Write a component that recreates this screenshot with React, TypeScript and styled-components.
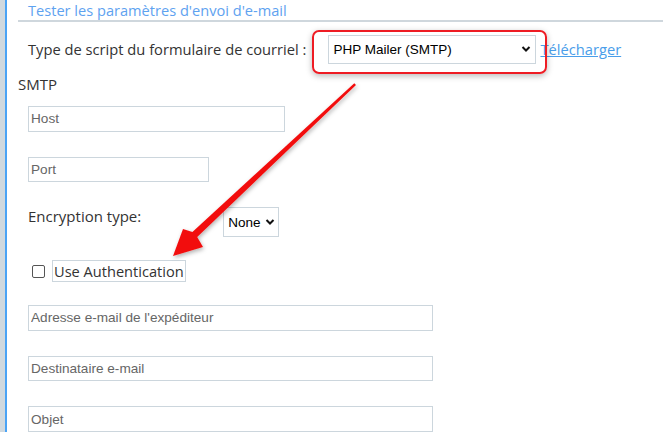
import React from "react";
import styled, { createGlobalStyle } from "styled-components";

const Global = createGlobalStyle`
  html, body { margin: 0; padding: 0; background: #fff; }
  body { width: 663px; height: 432px; overflow: hidden; font-family: "Open Sans", "Liberation Sans", sans-serif; }
`;

const Page = styled.div`
  position: relative;
  display: flex;
  width: 663px;
  height: 432px;
  overflow: hidden;
  background: #fff;
`;

const Rail = styled.div`
  flex: 0 0 5px;
  background: #d0d9df;
  border-right: 2px solid #4aa3f5;
`;

const Content = styled.div`
  flex: 1;
  display: flex;
  flex-direction: column;
  padding-left: 11px;
`;

const Title = styled.div`
  height: 20px;
  border-bottom: 2px solid #cfd7dd;
  padding-left: 10px;
  font-size: 14.6px;
  line-height: 20px;
  color: #5ea2f0;
  white-space: nowrap;
`;

const ScriptRow = styled.div`
  display: flex;
  align-items: center;
  margin-top: 13px;
  padding-left: 10px;
  height: 28px;
`;

const Label = styled.span`
  font-size: 14.7px;
  color: #333;
  white-space: nowrap;
`;

const SelectWrap = styled.span<{ $ml: number }>`
  position: relative;
  display: inline-flex;
  flex: none;
  margin-left: ${(p) => p.$ml}px;
`;

const Select = styled.select<{ $w: number; $h: number; $fs: number }>`
  appearance: none;
  -webkit-appearance: none;
  box-sizing: border-box;
  margin: 0;
  width: ${(p) => p.$w}px;
  height: ${(p) => p.$h}px;
  border: 1px solid #ccd6dd;
  background: #fff;
  padding: 0 0 0 4px;
  font-family: "Liberation Sans", Arial, sans-serif;
  font-size: ${(p) => p.$fs}px;
  color: #000;
  outline: none;
`;

const Chevron = styled.svg<{ $r: number }>`
  position: absolute;
  right: ${(p) => p.$r}px;
  top: 50%;
  margin-top: -4px;
  width: 10px;
  height: 8px;
  pointer-events: none;
`;

const Highlight = styled.span`
  position: absolute;
  left: -16px;
  top: -5px;
  right: -11px;
  bottom: -10px;
  border: 2px solid #ee1c24;
  border-radius: 7px;
  box-shadow: 0 2px 6px rgba(0, 0, 0, 0.28);
  pointer-events: none;
`;

const Link = styled.a`
  margin-left: 4px;
  font-size: 14.7px;
  color: #4a9eea;
  text-decoration: underline;
  white-space: nowrap;
`;

const Section = styled.div`
  margin-top: 12px;
  font-size: 15px;
  line-height: 18px;
  color: #333;
`;

const Field = styled.input<{ $w: number; $mt: number }>`
  display: block;
  box-sizing: border-box;
  width: ${(p) => p.$w}px;
  height: 26px;
  margin: ${(p) => p.$mt}px 0 0 10px;
  padding: 0 2px;
  border: 1px solid #ccd6dd;
  font-family: "Liberation Sans", Arial, sans-serif;
  font-size: 13.6px;
  color: #333;
  outline: none;
  &::placeholder { color: #666; }
`;

const EncRow = styled.div`
  display: flex;
  align-items: flex-start;
  margin-top: 25px;
  padding-left: 10px;
  height: 30px;
`;

const EncLabel = styled(Label)`
  font-size: 15px;
  line-height: 20px;
  margin-top: -1px;
`;

const CheckRow = styled.div`
  display: flex;
  align-items: center;
  margin-top: 23px;
  padding-left: 14px;
  height: 22px;
`;

const Box = styled.span`
  box-sizing: border-box;
  width: 13px;
  height: 13px;
  border: 1px solid #555;
  border-radius: 2px;
  background: #fff;
`;

const CheckLabel = styled.span`
  margin-left: 7px;
  height: 22px;
  box-sizing: border-box;
  border: 1px solid #ccd6dd;
  padding: 0 1px;
  font-size: 14.6px;
  line-height: 20px;
  color: #333;
`;

const Overlay = styled.svg`
  position: absolute;
  left: 0;
  top: 0;
  width: 663px;
  height: 432px;
  pointer-events: none;
`;

const ChevronIcon = ({ r }: { r: number }) => (
  <Chevron $r={r} viewBox="0 0 10 8">
    <path d="M1.5 2 L5 5.5 L8.5 2" fill="none" stroke="#111" strokeWidth="2" />
  </Chevron>
);

export default function App() {
  return (
    <>
      <Global />
      <Page>
        <Rail />
        <Content>
          <Title>Tester les paramètres d'envoi d'e-mail</Title>
          <ScriptRow>
            <Label>Type de script du formulaire de courriel :</Label>
            <SelectWrap $ml={22}>
              <Select $w={208} $h={29} $fs={13.5} defaultValue="smtp">
                <option value="smtp">PHP Mailer (SMTP)</option>
              </Select>
              <ChevronIcon r={5} />
              <Highlight />
            </SelectWrap>
            <Link href="#">Télécharger</Link>
          </ScriptRow>
          <Section>SMTP</Section>
          <Field $w={257} $mt={13} placeholder="Host" />
          <Field $w={181} $mt={25} placeholder="Port" />
          <EncRow>
            <EncLabel>Encryption type:</EncLabel>
            <SelectWrap $ml={82}>
              <Select $w={56} $h={30} $fs={13.5} defaultValue="none">
                <option value="none">None</option>
              </Select>
              <ChevronIcon r={4} />
            </SelectWrap>
          </EncRow>
          <CheckRow>
            <Box />
            <CheckLabel>Use Authentication</CheckLabel>
          </CheckRow>
          <Field $w={405} $mt={23} placeholder="Adresse e-mail de l'expéditeur" />
          <Field $w={405} $mt={25} placeholder="Destinataire e-mail" />
          <Field $w={405} $mt={25} placeholder="Objet" />
        </Content>
        <Overlay viewBox="0 0 663 432">
          <defs>
            <filter id="sh" x="-20%" y="-20%" width="140%" height="140%">
              <feDropShadow dx="1" dy="2" stdDeviation="2" floodColor="#000" floodOpacity="0.3" />
            </filter>
          </defs>
          <polygon
            filter="url(#sh)"
            fill="#f21010"
            points="354.3,83.3 192.4,232 183,229 173,256 203,247 197.2,237 356,85"
          />
        </Overlay>
      </Page>
    </>
  );
}
